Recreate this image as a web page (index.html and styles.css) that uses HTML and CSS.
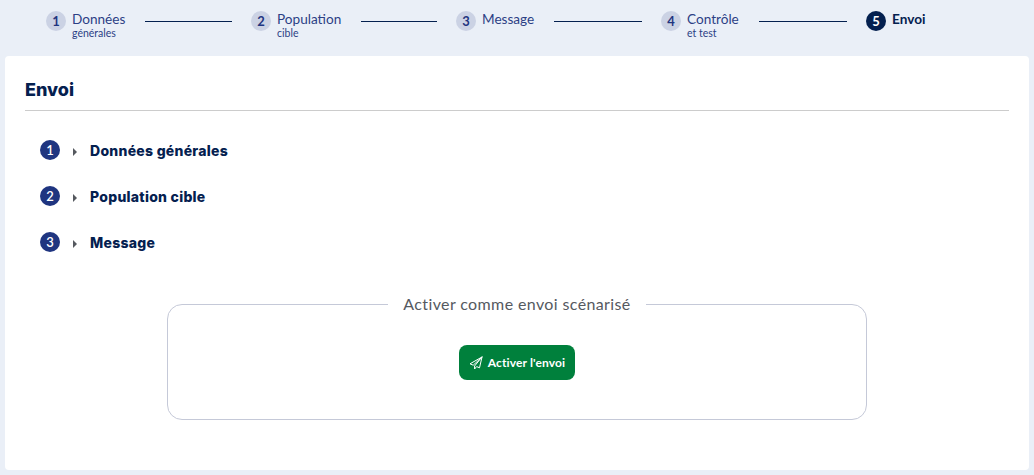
FILE: index.html
```html
<!DOCTYPE html>
<html lang="fr">
<head>
<meta charset="utf-8">
<title>Envoi</title>
<link rel="stylesheet" href="styles.css">
</head>
<body>
<nav class="stepper">
  <div class="step">
    <span class="step-num">1</span>
    <div class="step-text"><div class="step-title">Données</div><div class="step-sub">générales</div></div>
    <span class="step-line"></span>
  </div>
  <div class="step">
    <span class="step-num">2</span>
    <div class="step-text"><div class="step-title">Population</div><div class="step-sub">cible</div></div>
    <span class="step-line"></span>
  </div>
  <div class="step">
    <span class="step-num">3</span>
    <div class="step-text"><div class="step-title">Message</div></div>
    <span class="step-line"></span>
  </div>
  <div class="step">
    <span class="step-num">4</span>
    <div class="step-text"><div class="step-title">Contrôle</div><div class="step-sub">et test</div></div>
    <span class="step-line"></span>
  </div>
  <div class="step step-active">
    <span class="step-num">5</span>
    <div class="step-text"><div class="step-title">Envoi</div></div>
  </div>
</nav>
<main class="card">
  <h1 class="card-title">Envoi</h1>
  <ul class="sections">
    <li class="section"><span class="section-num">1</span><span class="caret"></span><span class="section-name">Données générales</span></li>
    <li class="section"><span class="section-num">2</span><span class="caret"></span><span class="section-name">Population cible</span></li>
    <li class="section"><span class="section-num">3</span><span class="caret"></span><span class="section-name">Message</span></li>
  </ul>
  <fieldset class="box">
    <legend class="box-legend">Activer comme envoi scénarisé</legend>
    <button class="send-btn" type="button">
      <svg class="send-icon" viewBox="0 0 14 14" width="14" height="14" fill="none" stroke="currentColor" stroke-width="1" stroke-linejoin="round" stroke-linecap="round"><path d="M13 1 1 7.8l3.2 1.4L13 1 5.6 10v3l2-2.4 2.9 1.2L13 1Z"/></svg>
      <span>Activer l'envoi</span>
    </button>
  </fieldset>
</main>
</body>
</html>
```

FILE: styles.css
```css
* { box-sizing: border-box; }
html, body { margin: 0; height: 100%; }
body {
  width: 1034px;
  height: 475px;
  overflow: hidden;
  background: #eaeff7;
  font-family: "Lato", "Noto Sans", sans-serif;
  padding: 0 5px 5px;
  display: flex;
  flex-direction: column;
}
.stepper {
  height: 56px;
  padding: 11px 0 0 41px;
  display: grid;
  grid-template-columns: repeat(4, 205px) auto;
  justify-content: start;
  align-items: start;
}
.step { display: flex; align-items: flex-start; padding-right: 19px; }
.step-num {
  width: 20px;
  height: 20px;
  flex: none;
  border-radius: 50%;
  background: #cbd2e4;
  color: #1f3580;
  font-size: 13px;
  font-weight: 700;
  display: flex;
  align-items: center;
  justify-content: center;
}
.step-text { margin-left: 6px; }
.step-title { font-size: 13.6px; line-height: 17px; color: #2c3f85; white-space: nowrap; }
.step-sub { font-size: 10.5px; line-height: 11px; margin-top: 0; color: #2c3f85; white-space: nowrap; }
.step-line { flex: 1; height: 1px; margin: 10px 0 0 20px; background: #04204f; }
.step-active { padding-right: 0; }
.step-active .step-num { background: #04204f; color: #fff; }
.step-active .step-title { font-weight: 700; color: #04204f; }

.card {
  flex: 1;
  background: #fff;
  border-radius: 4px;
  padding: 20px 20px 0;
}
.card-title {
  margin: 0;
  height: 35px;
  font-family: "Inter", "Noto Sans", sans-serif;
  font-size: 18px;
  font-weight: 800;
  line-height: 27px;
  color: #04204f;
  border-bottom: 1px solid #cccccc;
}
.sections { list-style: none; margin: 0; padding: 29px 0 0 15px; }
.section { display: flex; align-items: center; height: 20px; margin-bottom: 26px; }
.section-num {
  width: 20px;
  height: 20px;
  flex: none;
  border-radius: 50%;
  background: #1f3580;
  color: #fff;
  font-size: 13px;
  font-weight: 600;
  display: flex;
  align-items: center;
  justify-content: center;
}
.caret {
  width: 0;
  height: 0;
  margin: 4px 13px 0 13px;
  border-left: 4px solid #55595f;
  border-top: 4px solid transparent;
  border-bottom: 4px solid transparent;
}
.section-name {
  font-family: "Inter", "Noto Sans", sans-serif;
  font-size: 14px;
  font-weight: 800;
  color: #04204f;
  letter-spacing: 0.27px;
}
.box {
  width: 700px;
  height: 126px;
  margin: 42px 0 0 142px;
  padding: 0;
  border: 1px solid #c5c9d8;
  border-radius: 15px;
  text-align: center;
}
.box-legend {
  margin: 0 auto;
  padding: 0 15px;
  font-size: 16px;
  line-height: 20px;
  letter-spacing: 0.38px;
  color: #55595f;
}
.send-btn {
  margin-top: 31px;
  width: 116px;
  height: 35px;
  border: 0;
  border-radius: 8px;
  background: #00803c;
  color: #fff;
  font-family: inherit;
  font-size: 12px;
  font-weight: 700;
  letter-spacing: 0.14px;
  display: inline-flex;
  align-items: center;
  justify-content: center;
  gap: 5px;
}
.send-icon { flex: none; }
```
